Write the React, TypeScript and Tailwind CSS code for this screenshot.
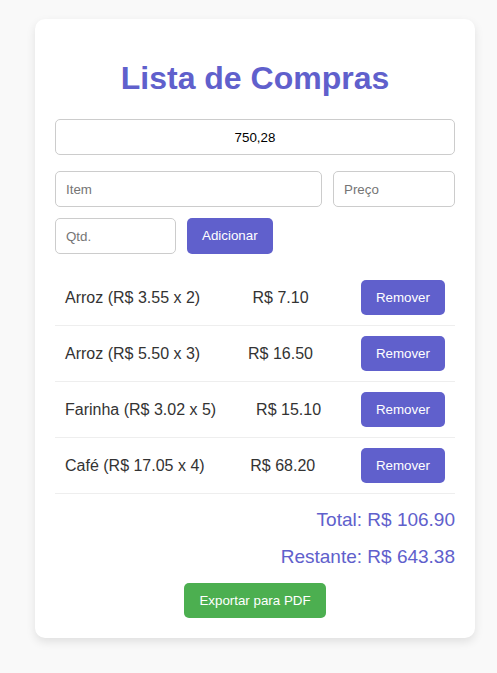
const items = [
  { name: "Arroz", price: 3.55, qty: 2 },
  { name: "Arroz", price: 5.5, qty: 3 },
  { name: "Farinha", price: 3.02, qty: 5 },
  { name: "Café", price: 17.05, qty: 4 },
];

const font = { fontFamily: '"Liberation Sans", Arial, sans-serif' };

export default function App() {
  const total = items.reduce((s, i) => s + i.price * i.qty, 0);
  const budget = 750.28;

  return (
    <div className="min-h-[673px] bg-[#f9f9f9] pt-[19px] pb-[36px]" style={font}>
      <div className="ml-[35px] w-[440px] rounded-[10px] bg-white p-5 shadow-[0_4px_10px_rgba(0,0,0,0.1)]">
        <h1 className="mt-[21px] mb-[22px] text-center text-[32px] font-bold leading-[37px] text-[#6060cc]">
          Lista de Compras
        </h1>

        <input
          defaultValue="750,28"
          className="block h-9 w-full rounded-[5px] border border-[#ccc] px-2.5 text-center text-[13.33px] text-black outline-none"
        />

        <div className="mt-4 flex gap-[11px]">
          <input
            placeholder="Item"
            className="h-9 w-[267px] rounded-[5px] border border-[#ccc] px-2.5 text-[13.33px] outline-none placeholder:text-[#757575]"
          />
          <input
            placeholder="Preço"
            className="h-9 w-[122px] rounded-[5px] border border-[#ccc] px-2.5 text-[13.33px] outline-none placeholder:text-[#757575]"
          />
        </div>
        <div className="mt-[11px] flex gap-[11px]">
          <input
            placeholder="Qtd."
            className="h-9 w-[121px] rounded-[5px] border border-[#ccc] px-2.5 text-[13.33px] outline-none placeholder:text-[#757575]"
          />
          <button className="h-9 rounded-[5px] bg-[#6060cc] px-[15px] text-[13.33px] text-white">
            Adicionar
          </button>
        </div>

        <ul className="mt-4">
          {items.map((item, i) => (
            <li
              key={i}
              className="flex items-center justify-between border-b border-[#eee] px-2.5 py-2.5 text-base text-[#333]"
            >
              <span>
                {item.name} (R$ {item.price.toFixed(2)} x {item.qty})
              </span>
              <span>R$ {(item.price * item.qty).toFixed(2)}</span>
              <button className="h-[35px] rounded-[5px] bg-[#6060cc] px-[15px] text-[13.33px] text-white">
                Remover
              </button>
            </li>
          ))}
        </ul>

        <p className="mt-[15px] text-right text-[19px] leading-[22px] text-[#6060cc]">
          Total: R$ {total.toFixed(2)}
        </p>
        <p className="mt-[15px] text-right text-[19px] leading-[22px] text-[#6060cc]">
          Restante: R$ {(budget - total).toFixed(2)}
        </p>

        <div className="mt-[15px] flex justify-center">
          <button className="h-[35px] rounded-[5px] bg-[#4caf50] px-[15px] text-[13.33px] text-white">
            Exportar para PDF
          </button>
        </div>
      </div>
    </div>
  );
}
